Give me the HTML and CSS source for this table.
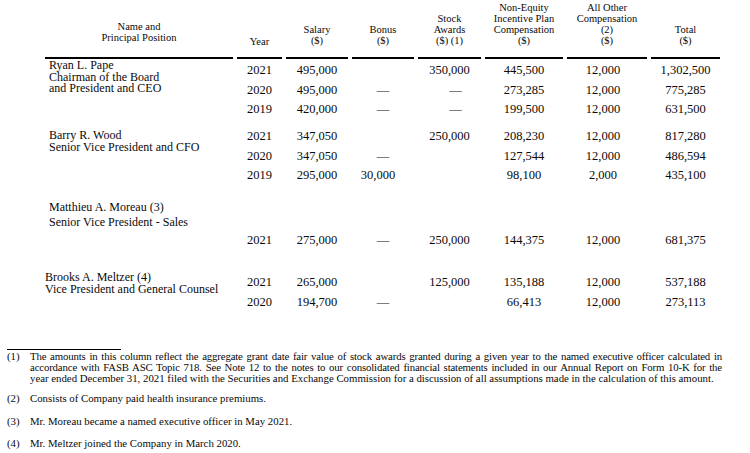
FILE: index.html
```html
<!DOCTYPE html>
<html lang="en">
<head>
<meta charset="utf-8">
<title>Summary Compensation Table</title>
<link rel="stylesheet" href="styles.css">
</head>
<body>
<div class="page">
  <div class="cols head">
    <div class="th th-name">Name and<br>Principal Position</div>
    <div class="th th-year">Year</div>
    <div class="th th-two">Salary<br>($)</div>
    <div class="th th-two">Bonus<br>($)</div>
    <div class="th th-three">Stock<br>Awards<br>($) (1)</div>
    <div class="th th-four">Non-Equity<br>Incentive Plan<br>Compensation<br>($)</div>
    <div class="th th-four">All Other<br>Compensation<br>(2)<br>($)</div>
    <div class="th th-two">Total<br>($)</div>
  </div>

  <div class="cols grp grp-pape">
    <div class="who who-3">Ryan L. Pape<br>Chairman of the Board<br>and President and CEO</div>
    <div class="c">2021</div><div class="c">495,000</div><div class="c"></div><div class="c">350,000</div><div class="c">445,500</div><div class="c c-other">12,000</div><div class="c">1,302,500</div>
    <div class="c">2020</div><div class="c">495,000</div><div class="c">—</div><div class="c c-dash">—</div><div class="c">273,285</div><div class="c c-other">12,000</div><div class="c">775,285</div>
    <div class="c">2019</div><div class="c">420,000</div><div class="c">—</div><div class="c c-dash">—</div><div class="c">199,500</div><div class="c c-other">12,000</div><div class="c">631,500</div>
  </div>

  <div class="cols grp grp-wood">
    <div class="who who-3">Barry R. Wood<br>Senior Vice President and CFO</div>
    <div class="c">2021</div><div class="c">347,050</div><div class="c"></div><div class="c">250,000</div><div class="c">208,230</div><div class="c c-other">12,000</div><div class="c">817,280</div>
    <div class="c">2020</div><div class="c">347,050</div><div class="c">—</div><div class="c"></div><div class="c">127,544</div><div class="c c-other">12,000</div><div class="c">486,594</div>
    <div class="c">2019</div><div class="c">295,000</div><div class="c c-bonus">30,000</div><div class="c"></div><div class="c">98,100</div><div class="c c-other">2,000</div><div class="c">435,100</div>
  </div>

  <div class="cols grp grp-moreau">
    <div class="who who-wide">Matthieu A. Moreau (3)<br>Senior Vice President - Sales</div>
    <div class="c">2021</div><div class="c">275,000</div><div class="c">—</div><div class="c">250,000</div><div class="c">144,375</div><div class="c c-other">12,000</div><div class="c">681,375</div>
  </div>

  <div class="cols grp grp-meltzer">
    <div class="who who-2 who-flush">Brooks A. Meltzer (4)<br>Vice President and General Counsel</div>
    <div class="c">2021</div><div class="c">265,000</div><div class="c"></div><div class="c">125,000</div><div class="c">135,188</div><div class="c c-other">12,000</div><div class="c">537,188</div>
    <div class="c">2020</div><div class="c">194,700</div><div class="c">—</div><div class="c"></div><div class="c">66,413</div><div class="c c-other">12,000</div><div class="c">273,113</div>
  </div>

  <div class="notes">
    <div class="rule"></div>
    <div class="note note-1">
      <div class="num">(1)</div>
      <div class="txt">
        <div class="line just">The amounts in this column reflect the aggregate grant date fair value of stock awards granted during a given year to the named executive officer calculated in</div>
        <div class="line just">accordance with FASB ASC Topic 718. See Note 12 to the notes to our consolidated financial statements included in our Annual Report on Form 10-K for the</div>
        <div class="line">year ended December 31, 2021 filed with the Securities and Exchange Commission for a discussion of all assumptions made in the calculation of this amount.</div>
      </div>
    </div>
    <div class="note note-2">
      <div class="num">(2)</div>
      <div class="txt">Consists of Company paid health insurance premiums.</div>
    </div>
    <div class="note note-3">
      <div class="num">(3)</div>
      <div class="txt">Mr. Moreau became a named executive officer in May 2021.</div>
    </div>
    <div class="note note-4">
      <div class="num">(4)</div>
      <div class="txt">Mr. Meltzer joined the Company in March 2020.</div>
    </div>
  </div>
</div>
</body>
</html>
```

FILE: styles.css
```css
html, body {
  margin: 0;
  padding: 0;
  background: #ffffff;
}

body {
  color: #0a0a0a;
  font-family: "Liberation Serif", "Times New Roman", serif;
}

.page {
  width: 750px;
  height: 453px;
  overflow: hidden;
}

.cols {
  display: grid;
  grid-template-columns: 188px 45px 62px 62px 63px 78px 80px 69px;
  column-gap: 4px;
  margin-left: 45px;
  width: 675px;
}

/* header */
.head {
  height: 59px;
  align-items: end;
}

.th {
  font-size: 10.5px;
  line-height: 11px;
  text-align: center;
  border-bottom: 2px solid #000000;
}

.th-name { padding-bottom: 14px; }
.th-year { padding-bottom: 10px; }
.th-two { padding-bottom: 11px; }
.th-three { padding-bottom: 11px; }
.th-four { padding-bottom: 11px; }

/* body groups */
.c {
  font-size: 12.5px;
  line-height: 20px;
  text-align: center;
  white-space: nowrap;
}

.c-other { padding-right: 8px; }
.c-dash { padding-left: 12px; }
.c-bonus { padding-right: 10px; }

.who {
  font-size: 12px;
  line-height: 11.5px;
  padding-left: 4px;
  white-space: nowrap;
}

.who-3 { grid-row: span 3; }
.who-2 { grid-row: span 2; }
.who-flush { padding-left: 0; }

.grp-pape {
  padding-top: 1px;
  grid-template-rows: 20px 19px 20px;
}

.grp-wood {
  padding-top: 7px;
  grid-template-rows: 20px 19px 19px;
}

.grp-wood .who { margin-top: 4px; }

.grp-moreau {
  padding-top: 16px;
  grid-template-rows: 50px;
}

.grp-moreau .who {
  line-height: 15px;
  align-self: start;
}

.grp-moreau .c { align-self: end; }

.grp-meltzer {
  padding-top: 22px;
  grid-template-rows: 20px 20px;
}

/* footnotes */
.notes {
  padding-top: 37px;
  font-size: 10.8px;
  line-height: 11px;
}

.rule {
  width: 114px;
  height: 1px;
  background: #000000;
  margin-left: 7px;
}

.note {
  display: grid;
  grid-template-columns: 23px 692px;
  margin-left: 7px;
}

.note-1 { margin-top: 1px; }
.note-2 { margin-top: 9px; }
.note-3 { margin-top: 12px; }
.note-4 { margin-top: 11px; }

.line.just {
  text-align: justify;
  text-align-last: justify;
  letter-spacing: -0.15px;
}
```
